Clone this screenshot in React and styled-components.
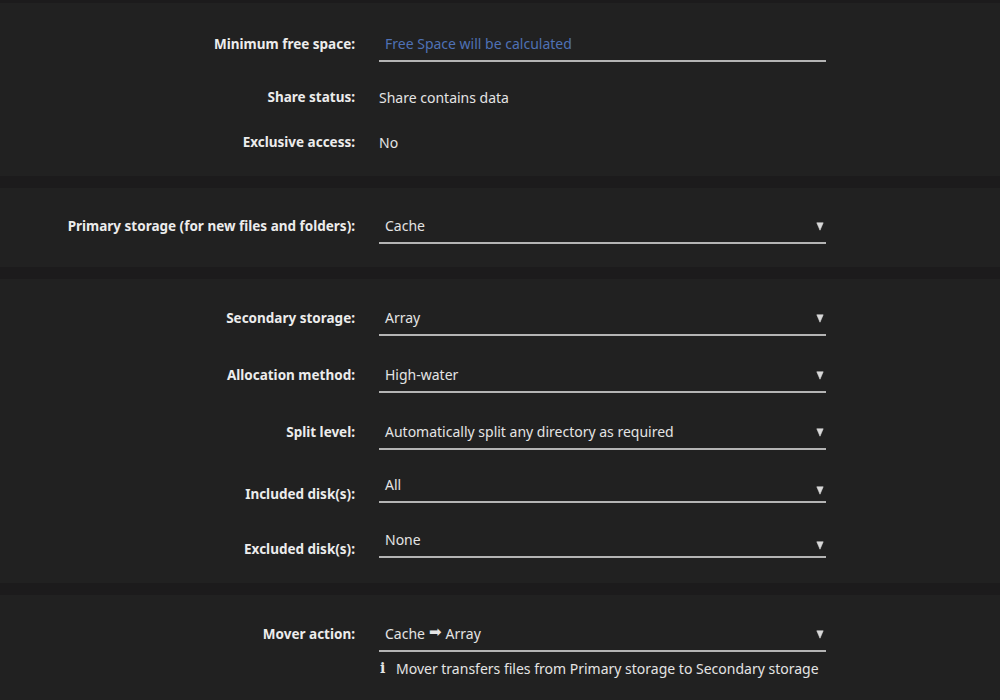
import React from "react";
import styled, { createGlobalStyle } from "styled-components";

const GlobalStyle = createGlobalStyle`
  html, body {
    margin: 0;
    padding: 0;
    background: #1c1b1c;
  }
  body {
    font-family: "Noto Sans", "Open Sans", sans-serif;
    font-size: 14px;
    color: #e4e4e4;
  }
`;

const Page = styled.div`
  width: 1000px;
  height: 700px;
  overflow: hidden;
  padding-top: 3px;
  box-sizing: border-box;
  display: flex;
  flex-direction: column;
  gap: 12px;
`;

const Panel = styled.section`
  background: #212121;
  padding: ${({ $pad }) => $pad};
  display: flex;
  flex-direction: column;
  flex: ${({ $fill }) => ($fill ? 1 : "none")};
`;

const Row = styled.div`
  display: grid;
  grid-template-columns: 355px 447px;
  column-gap: 24px;
  align-items: ${({ $align }) => $align || "center"};
  margin-top: ${({ $mt }) => $mt || 0}px;
`;

const Label = styled.div`
  text-align: right;
  font-weight: 700;
  font-size: 13.5px;
  color: #ececec;
  line-height: 18px;
`;

const Value = styled.div`
  height: ${({ $h }) => $h || 36}px;
  display: flex;
  align-items: center;
  color: #e4e4e4;
`;

const Field = styled.div`
  position: relative;
  height: 36px;
  box-sizing: border-box;
  border-bottom: 2px solid #b4b4b4;
  padding: 0 6px;
  display: flex;
  align-items: center;
  color: ${({ $placeholder }) => ($placeholder ? "#4f71b5" : "#e4e4e4")};
`;

const Caret = styled.svg`
  position: absolute;
  right: 2px;
  top: ${({ $low }) => ($low ? 19 : 14)}px;
`;

const BigArrow = styled.span`
  font-family: "DejaVu Sans", sans-serif;
  font-size: 15px;
  line-height: 1;
  margin: 0 4px 1px;
`;

const Hint = styled.div`
  grid-column: 2;
  display: flex;
  align-items: center;
  gap: 10px;
  height: 32px;
  padding-left: 1px;
  color: #e4e4e4;
`;

const InfoIcon = styled.span`
  font-family: "DejaVu Serif", serif;
  font-weight: 700;
  font-size: 14px;
  width: 6px;
`;

const Arrow = ({ low }) => (
  <Caret $low={low} width="8" height="9" viewBox="0 0 8 9">
    <path d="M0.8 0.8 L7.2 0.8 L4 8.2 Z" fill="#d8d8d8" stroke="#d8d8d8" strokeWidth="0.6" strokeLinejoin="round" />
  </Caret>
);

const Select = ({ children, low }) => (
  <Field>
    {children}
    <Arrow low={low} />
  </Field>
);

export default function App() {
  return (
    <>
      <GlobalStyle />
      <Page>
        <Panel $pad="23px 0 16px">
          <Row>
            <Label>Minimum free space:</Label>
            <Field $placeholder>Free Space will be calculated</Field>
          </Row>
          <Row $mt={17}>
            <Label>Share status:</Label>
            <Value>Share contains data</Value>
          </Row>
          <Row $mt={9}>
            <Label>Exclusive access:</Label>
            <Value>No</Value>
          </Row>
        </Panel>

        <Panel $pad="20px 0 23px">
          <Row>
            <Label>Primary storage (for new files and folders):</Label>
            <Select>Cache</Select>
          </Row>
        </Panel>

        <Panel $pad="21px 0 25px">
          <Row>
            <Label>Secondary storage:</Label>
            <Select>Array</Select>
          </Row>
          <Row $mt={21}>
            <Label>Allocation method:</Label>
            <Select>High-water</Select>
          </Row>
          <Row $mt={21}>
            <Label>Split level:</Label>
            <Select>Automatically split any directory as required</Select>
          </Row>
          <Row $mt={17} $align="end">
            <Label>Included disk(s):</Label>
            <Select low>All</Select>
          </Row>
          <Row $mt={19} $align="end">
            <Label>Excluded disk(s):</Label>
            <Select low>None</Select>
          </Row>
        </Panel>

        <Panel $pad="21px 0 0" $fill>
          <Row>
            <Label>Mover action:</Label>
            <Select>
              Cache<BigArrow>➡</BigArrow>Array
            </Select>
            <Hint>
              <InfoIcon>i</InfoIcon>
              Mover transfers files from Primary storage to Secondary storage
            </Hint>
          </Row>
        </Panel>
      </Page>
    </>
  );
}
